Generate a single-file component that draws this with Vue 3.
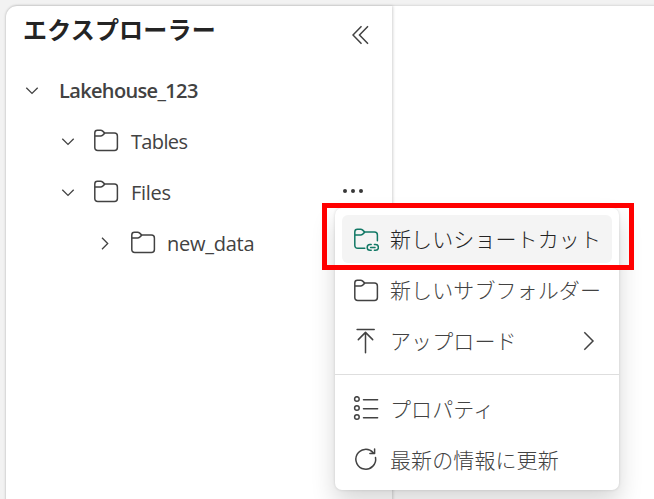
<script setup>
import { h } from 'vue'

const tree = [
  { label: 'Lakehouse_123', level: 0, open: true, root: true, width: 'lake' },
  { label: 'Tables', level: 1, open: true, width: 'tables' },
  { label: 'Files', level: 1, open: true, width: 'files' },
  { label: 'new_data', level: 2, open: false, width: 'data' },
]

const menu = [
  { label: '新しいショートカット', icon: 'shortcut', active: true },
  { label: '新しいサブフォルダー', icon: 'folder' },
  { label: 'アップロード', icon: 'upload', submenu: true },
  { divider: true },
  { label: 'プロパティ', icon: 'list' },
  { label: '最新の情報に更新', icon: 'refresh' },
]

const paths = {
  folder: ['M1.8 8.5V5.9Q1.8 3.3 4.4 3.3H7.6Q8.8 3.3 9.7 4.1L11.8 6.1H21.4Q24.4 6.1 24.4 9.1V20.4Q24.4 23.4 21.4 23.4H4.8Q1.8 23.4 1.8 20.4ZM1.8 8.9H7.6Q8.8 8.9 9.7 8.1L11.8 6.1'],
  shortcut: ['M11.8 22.3H4.8Q1.8 22.3 1.8 19.3V5.9Q1.8 3.3 4.4 3.3H7.6Q8.8 3.3 9.7 4.1L11.8 6.1H21.4Q24.4 6.1 24.4 9.1V14.8M1.8 8.9H7.6Q8.8 8.9 9.7 8.1L11.8 6.1', 'M18.2 18.6H17A2.8 2.8 0 0 0 17 24.2H18.2M21.4 18.6H22.6A2.8 2.8 0 0 1 22.6 24.2H21.4M17.6 21.4H22'],
  upload: ['M4.1 1.6H21.2M12.5 24.8V4.8M5.3 11.6L12.5 4.4L19.7 11.6'],
  list: ['M10.5 3.7H24.6M10.5 12.7H24.6M10.5 21.7H24.6', 'M6.2 3A2.3 2.3 0 1 1 1.6 3A2.3 2.3 0 1 1 6.2 3M6.2 12A2.3 2.3 0 1 1 1.6 12A2.3 2.3 0 1 1 6.2 12M6.2 21A2.3 2.3 0 1 1 1.6 21A2.3 2.3 0 1 1 6.2 21'],
  refresh: ['M22.5 10.4A9.9 9.9 0 1 1 20.2 5.7L20.9 6.5M21.6 2V6.6H16.9'],
}

const Icon = (props) =>
  h('svg', { viewBox: '0 0 26 26', width: 26, height: 26, fill: 'none', stroke: 'currentColor', 'stroke-width': 1.5, 'stroke-linecap': 'round', 'stroke-linejoin': 'round' },
    paths[props.name].map((d) => h('path', { d })))
Icon.props = ['name']
</script>

<template>
  <div class="page">
    <div class="workspace">
      <aside class="explorer">
        <header>
          <h1>エクスプローラー</h1>
          <svg class="collapse" width="18" height="20" viewBox="0 0 18 20"><path d="M9.5 1.2L1 10L9.5 18.8M16 1.2L7.5 10L16 18.8" /></svg>
        </header>
        <div v-for="row in tree" :key="row.label" class="row" :class="['level' + row.level, row.width]">
          <svg class="chevron" width="14" height="14" viewBox="0 0 14 14">
            <path :d="row.open ? 'M1.3 3.7L7 9.4L12.7 3.7' : 'M4 0.8L9.7 6.5L4 12.2'" />
          </svg>
          <Icon v-if="!row.root" name="folder" class="tree-folder" />
          <span class="name">{{ row.label }}</span>
          <span v-if="row.label === 'Files'" class="more"><i /><i /><i /></span>
        </div>
      </aside>
      <main />
    </div>
    <div class="menu">
      <template v-for="(item, i) in menu" :key="i">
        <hr v-if="item.divider" />
        <div v-else class="item" :class="{ active: item.active }">
          <Icon :name="item.icon" :class="item.icon" />
          <span>{{ item.label }}</span>
          <svg v-if="item.submenu" class="next" width="14" height="20" viewBox="0 0 14 20"><path d="M2.3 1.3L11 10L2.3 18.7" /></svg>
        </div>
      </template>
    </div>
    <div class="highlight" />
  </div>
</template>

<style>
body { background: #f2f2f2; }
</style>

<style scoped>
* { box-sizing: border-box; }
.page {
  position: relative;
  width: 654px;
  height: 499px;
  overflow: hidden;
  padding: 6px 0 0 6px;
  background: #f2f2f2;
  color: #424242;
  font-family: "Open Sans", "Noto Sans CJK JP", sans-serif;
}
.workspace {
  display: flex;
  height: 510px;
  width: 670px;
  border-radius: 11px 0 0 0;
  background: #fff;
  box-shadow: 0 0 3px rgba(0, 0, 0, 0.22);
}
.explorer {
  width: 386px;
  border-radius: 11px 0 0 0;
  box-shadow: 1px 0 3px rgba(0, 0, 0, 0.18);
}
main { flex: 1; }
header {
  display: flex;
  justify-content: space-between;
  height: 59px;
  padding: 3px 22px 0 17px;
}
h1 {
  margin: 0;
  color: #242424;
  font: 600 24px/40px "Noto Sans CJK JP", sans-serif;
  letter-spacing: 0.2px;
}
svg { flex: none; fill: none; stroke: currentColor; }
.collapse { margin-top: 16px; stroke-width: 1.5; }
.row {
  display: flex;
  align-items: center;
  height: 51px;
  font-size: 20px;
  line-height: 30px;
  white-space: nowrap;
}
.level0 { padding-left: 19px; font-weight: 600; }
.level1 { padding-left: 55px; }
.level2 { padding-left: 92px; }
.chevron { stroke-width: 1.3; }
.tree-folder { margin: -3px 0 0 18px; }
.name { margin-left: 12px; }
.level0 .name { margin-left: 20px; }
.level2 .name { margin-left: 11px; }
.lake .name { letter-spacing: -0.65px; }
.tables .name { letter-spacing: -0.65px; }
.files .name { letter-spacing: -0.3px; }
.data .name { letter-spacing: -0.25px; }
.more { display: flex; gap: 4px; margin: -3px 0 0 auto; padding-right: 29px; }
.more i { width: 4px; height: 4px; border-radius: 50%; background: #383838; }
.menu {
  position: absolute;
  left: 335px;
  top: 208px;
  width: 284px;
  height: 282px;
  padding: 7px 0;
  border-radius: 7px;
  background: #fff;
  box-shadow: 0 0 3px rgba(0, 0, 0, 0.14), 0 12px 24px rgba(0, 0, 0, 0.16);
}
.item {
  display: flex;
  align-items: center;
  height: 48px;
  margin: 0 7px 3px;
  padding: 0 16px 0 11px;
  border-radius: 6px;
  font: 300 21px/30px "Noto Sans CJK JP", sans-serif;
  letter-spacing: 0.1px;
  white-space: nowrap;
}
.item span { margin: -2px 0 0 11px; }
.active { background: #f4f4f4; color: #242424; }
.shortcut { color: #117865; }
.next { margin-left: auto; stroke-width: 1.5; }
hr { height: 1px; margin: 9px 0 10px; border: 0; background: #dedede; }
.highlight {
  position: absolute;
  left: 322px;
  top: 203px;
  width: 312px;
  height: 67px;
  border: 5px solid #f00;
}
</style>
